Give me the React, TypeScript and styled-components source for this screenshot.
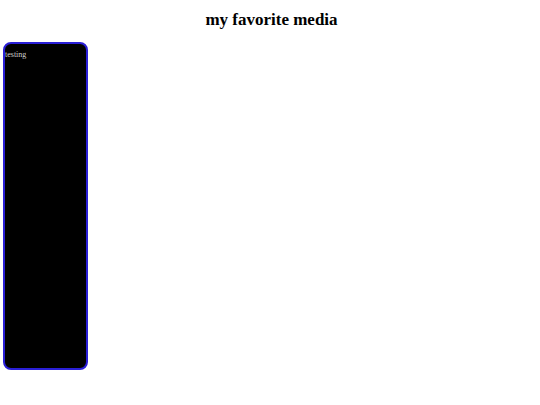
import React, { FC } from "react"
import styled, { createGlobalStyle } from "styled-components"

const GlobalStyle = createGlobalStyle`
  body {
    margin: 0;
    background: #ffffff;
    font-family: "Liberation Serif", "Times New Roman", serif;
  }
`

const Page = styled.div`
  display: flex;
  flex-direction: column;
  padding: 10px 0 0 3px;
`

const Title = styled.h1`
  margin: 0 0 12px 0;
  font-size: 17px;
  line-height: 20px;
  font-weight: bold;
  text-align: center;
  color: #000;
`

const Card = styled.div`
  box-sizing: border-box;
  width: 85px;
  height: 328px;
  background: #000;
  border: 2px solid #2a1fd6;
  border-radius: 8px;
  padding: 6px 0 0 0;
`

const CardText = styled.span`
  display: block;
  font-size: 8px;
  color: #cfcfcf;
`

const App: FC = () => (
  <>
    <GlobalStyle />
    <Page>
      <Title>my favorite media</Title>
      <Card>
        <CardText>testing</CardText>
      </Card>
    </Page>
  </>
)

export default App
